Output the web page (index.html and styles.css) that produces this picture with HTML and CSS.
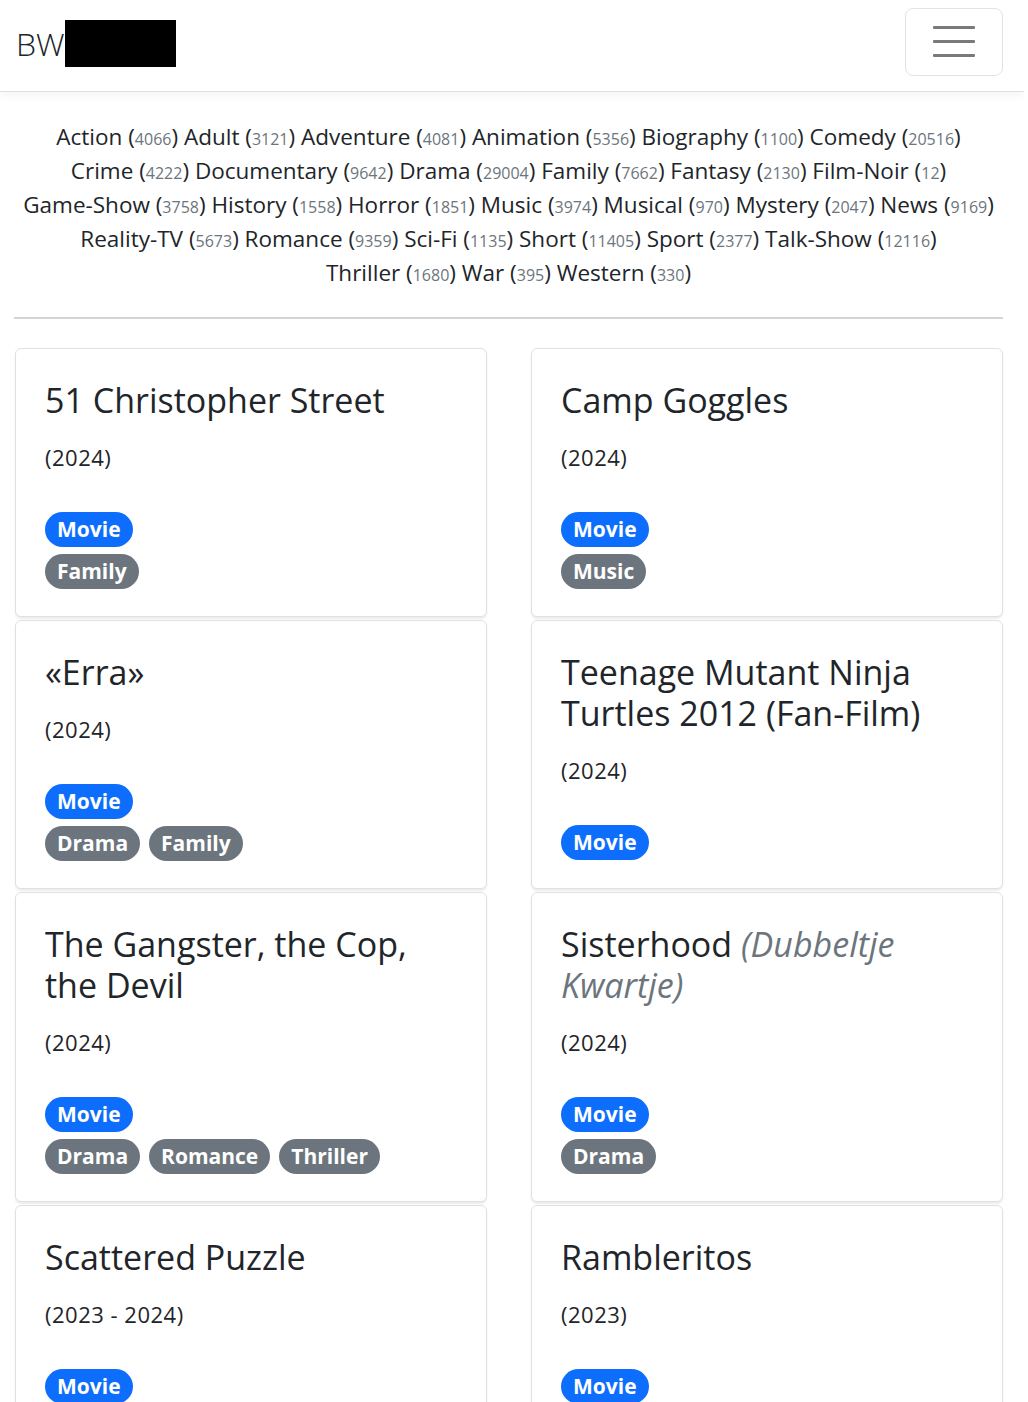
FILE: index.html
```html
<!DOCTYPE html>
<html lang="en">
<head>
<meta charset="utf-8">
<title>BW</title>
<link rel="stylesheet" href="styles.css">
</head>
<body>
<header class="navbar">
  <a class="brand" href="#">BW<span class="redact"></span></a>
  <button class="toggler" type="button" aria-label="Toggle navigation">
    <span class="bar"></span><span class="bar"></span><span class="bar"></span>
  </button>
</header>
<main class="container">
  <nav class="genres">
    <a href="#">Action</a> (<small>4066</small>) <a href="#">Adult</a> (<small>3121</small>) <a href="#">Adventure</a> (<small>4081</small>) <a href="#">Animation</a> (<small>5356</small>) <a href="#">Biography</a> (<small>1100</small>) <a href="#">Comedy</a> (<small>20516</small>)<br>
    <a href="#">Crime</a> (<small>4222</small>) <a href="#">Documentary</a> (<small>9642</small>) <a href="#">Drama</a> (<small>29004</small>) <a href="#">Family</a> (<small>7662</small>) <a href="#">Fantasy</a> (<small>2130</small>) <a href="#">Film-Noir</a> (<small>12</small>)<br>
    <a href="#">Game-Show</a> (<small>3758</small>) <a href="#">History</a> (<small>1558</small>) <a href="#">Horror</a> (<small>1851</small>) <a href="#">Music</a> (<small>3974</small>) <a href="#">Musical</a> (<small>970</small>) <a href="#">Mystery</a> (<small>2047</small>) <a href="#">News</a> (<small>9169</small>)<br>
    <a href="#">Reality-TV</a> (<small>5673</small>) <a href="#">Romance</a> (<small>9359</small>) <a href="#">Sci-Fi</a> (<small>1135</small>) <a href="#">Short</a> (<small>11405</small>) <a href="#">Sport</a> (<small>2377</small>) <a href="#">Talk-Show</a> (<small>12116</small>)<br>
    <a href="#">Thriller</a> (<small>1680</small>) <a href="#">War</a> (<small>395</small>) <a href="#">Western</a> (<small>330</small>)
  </nav>
  <hr class="divider">
  <section class="grid">
    <article class="card">
      <h3 class="title">51 Christopher Street</h3>
      <p class="year">(2024)</p>
      <div class="type"><span class="badge primary">Movie</span></div>
      <div class="tags"><span class="badge secondary">Family</span></div>
    </article>
    <article class="card">
      <h3 class="title">Camp Goggles</h3>
      <p class="year">(2024)</p>
      <div class="type"><span class="badge primary">Movie</span></div>
      <div class="tags"><span class="badge secondary">Music</span></div>
    </article>
    <article class="card">
      <h3 class="title">«Erra»</h3>
      <p class="year">(2024)</p>
      <div class="type"><span class="badge primary">Movie</span></div>
      <div class="tags"><span class="badge secondary">Drama</span><span class="badge secondary">Family</span></div>
    </article>
    <article class="card">
      <h3 class="title">Teenage Mutant Ninja Turtles 2012 (Fan-Film)</h3>
      <p class="year">(2024)</p>
      <div class="type"><span class="badge primary">Movie</span></div>
    </article>
    <article class="card">
      <h3 class="title">The Gangster, the Cop, the Devil</h3>
      <p class="year">(2024)</p>
      <div class="type"><span class="badge primary">Movie</span></div>
      <div class="tags"><span class="badge secondary">Drama</span><span class="badge secondary">Romance</span><span class="badge secondary">Thriller</span></div>
    </article>
    <article class="card">
      <h3 class="title">Sisterhood <em class="alt">(Dubbeltje Kwartje)</em></h3>
      <p class="year">(2024)</p>
      <div class="type"><span class="badge primary">Movie</span></div>
      <div class="tags"><span class="badge secondary">Drama</span></div>
    </article>
    <article class="card">
      <h3 class="title">Scattered Puzzle</h3>
      <p class="year">(2023 - 2024)</p>
      <div class="type"><span class="badge primary">Movie</span></div>
    </article>
    <article class="card">
      <h3 class="title">Rambleritos</h3>
      <p class="year">(2023)</p>
      <div class="type"><span class="badge primary">Movie</span></div>
    </article>
  </section>
</main>
</body>
</html>
```
FILE: styles.css
```css
* { box-sizing: border-box; }
html, body { margin: 0; padding: 0; }
body {
  font-family: "Open Sans", "Noto Sans", "Liberation Sans", sans-serif;
  color: #212529;
  background: #fff;
  width: 1024px;
}
.navbar {
  height: 92px;
  display: flex;
  align-items: center;
  justify-content: space-between;
  padding: 0 21px 0 16px;
  border-bottom: 1px solid #dee2e6;
  box-shadow: 0 4px 8px rgba(0,0,0,0.04);
}
.brand {
  display: flex;
  align-items: center;
  color: #212529;
  text-decoration: none;
  font-family: "Open Sans", sans-serif;
  font-size: 32px;
  font-weight: 300;
  letter-spacing: 0;
  margin-bottom: 4px;
}
.redact {
  display: inline-block;
  width: 111px;
  height: 47px;
  background: #000;
  margin-left: 0;
}
.toggler {
  width: 98px;
  height: 68px;
  margin-bottom: 8px;
  background: #fff;
  border: 1px solid #e3e3e3;
  border-radius: 8px;
  display: flex;
  flex-direction: column;
  align-items: center;
  justify-content: center;
  gap: 11px;
  padding: 0;
}
.bar {
  display: block;
  width: 42px;
  height: 3px;
  background: #7a7a7a;
  border-radius: 1px;
}
.container {
  padding: 0 21px 0 14px;
}
.genres {
  text-align: center;
  font-size: 22.5px;
  line-height: 34px;
  padding-top: 28px;
  margin: 0;
  white-space: nowrap;
}
.genres a { color: #212529; text-decoration: none; }
.genres small { font-size: 16px; line-height: 1; color: #6c757d; }
.divider {
  border: 0;
  border-top: 2px solid #d2d4d6;
  margin: 27px 0 29px;
}
.grid {
  display: grid;
  grid-template-columns: 472px 472px;
  column-gap: 44px;
  row-gap: 3px;
  padding-left: 1px;
}
.card {
  border: 1px solid #dfe1e3;
  border-radius: 6px;
  box-shadow: 0 2px 2px rgba(0,0,0,0.08);
  padding: 31px 29px 27px;
  background: #fff;
}
.title {
  font-size: 34px;
  font-weight: 500;
  line-height: 41px;
  margin: 0 0 20px;
}
.title .alt { color: #6c757d; font-weight: 400; }
.year {
  font-size: 22px;
  letter-spacing: 0.5px;
  line-height: 32px;
  margin: 0 0 39px;
}
.badge {
  display: inline-block;
  font-size: 21px;
  font-weight: 700;
  line-height: 35px;
  height: 35px;
  padding: 0 12px;
  border-radius: 18px;
  color: #fff;
}
.primary { background: #0d6efd; }
.secondary { background: #6c757d; }
.type { display: flex; }
.tags { display: flex; flex-wrap: wrap; gap: 9px; margin-top: 7px; }
```
